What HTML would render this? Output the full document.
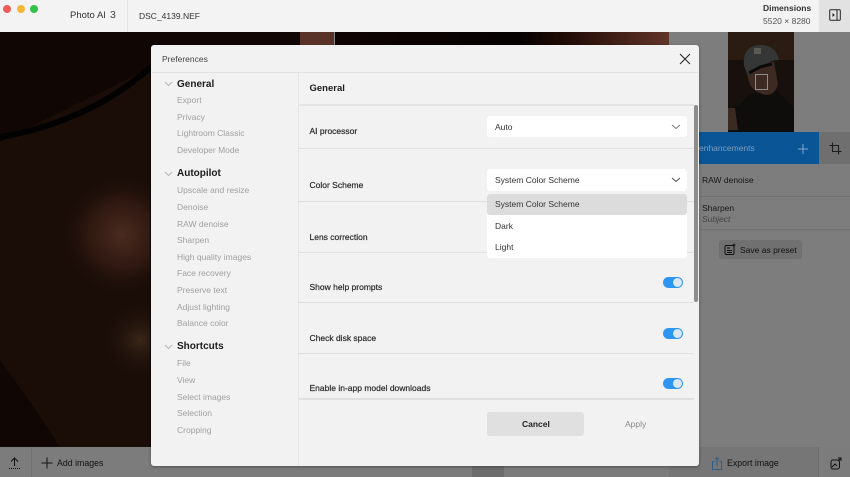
<!DOCTYPE html>
<html><head><meta charset="utf-8">
<style>
html,body{margin:0;padding:0}
body{width:850px;height:477px;overflow:hidden;position:relative;background:#7c7c7c;font-family:"Liberation Sans",sans-serif;color:#222}
div,span,svg{position:absolute}
.t{white-space:nowrap;line-height:12px;font-size:9px}
.h{font-size:10px;font-weight:bold;color:#1c1c1c;left:177px}
.s{color:#a0a0a0;left:177px;font-size:8.5px}
.l{left:309.5px;color:#2a2a2a;font-size:8.5px;-webkit-text-stroke:.2px #2a2a2a}
.ln{left:299px;width:395px;height:1px;background:#e0e0e0}
.sel{left:487px;width:200px;background:#fff;border-radius:3px}
.tg{left:663px;width:20px;height:11px;border-radius:6px;background:#2e96f2}
.tg i{position:absolute;right:1px;top:1px;width:9px;height:9px;border-radius:50%;background:#dbe7f2}
.d{color:#333;font-size:8.5px;left:495px}
.b{color:#111;font-size:8.5px}
</style></head><body>
<!-- photo -->
<svg style="left:0;top:32px" width="690" height="415" viewBox="0 32 690 415">
<defs>
<radialGradient id="a" cx="122" cy="235" r="62" gradientUnits="userSpaceOnUse"><stop offset="0" stop-color="#4a2b20"/><stop offset=".55" stop-color="#2e1810"/><stop offset="1" stop-color="#1a0d08" stop-opacity="0"/></radialGradient>
<radialGradient id="c" cx="140" cy="340" r="40" gradientUnits="userSpaceOnUse"><stop offset="0" stop-color="#3a2818"/><stop offset="1" stop-color="#1a0d08" stop-opacity="0"/></radialGradient>
<linearGradient id="b" x1="335" x2="669" y1="0" y2="0" gradientUnits="userSpaceOnUse"><stop offset="0" stop-color="#0e0403"/><stop offset=".55" stop-color="#060201"/><stop offset=".7" stop-color="#220c06"/><stop offset="1" stop-color="#623529"/></linearGradient>
</defs>
<rect x="0" y="32" width="690" height="415" fill="#100705"/>
<path d="M0 142 L150 68 L150 447 L60 447 Q30 400 0 360Z" fill="#1a0d08"/>
<rect x="50" y="165" width="100" height="140" fill="url(#a)"/>
<rect x="100" y="300" width="50" height="80" fill="url(#c)"/>
<path d="M-4 138 Q90 122 152 66" fill="none" stroke="#030201" stroke-width="6"/>
<rect x="300" y="32" width="34" height="13" fill="#5a3328"/>
<rect x="334" y="32" width="1" height="13" fill="#8a8a8a"/>
<rect x="335" y="32" width="334" height="13" fill="url(#b)"/>
</svg>
<div style="left:669px;top:32px;width:181px;height:415px;background:#7d7d7d"></div>
<!-- top bar -->
<div style="left:0;top:0;width:850px;height:32px;background:#f3f3f3"></div>
<div style="left:127px;top:0;width:1px;height:32px;background:#e4e4e4"></div>
<div style="left:3px;top:5px;width:8px;height:8px;border-radius:50%;background:#ef5b5b"></div>
<div style="left:17px;top:5px;width:8px;height:8px;border-radius:50%;background:#f5b73a"></div>
<div style="left:30px;top:5px;width:8px;height:8px;border-radius:50%;background:#34c04a"></div>
<div class="t" style="left:70px;top:10px;font-size:9.5px;color:#333">Photo AI</div>
<div class="t" style="left:110px;top:9px;font-size:10.5px;color:#444">3</div>
<div class="t" style="left:139px;top:10px;font-size:8.5px;color:#333">DSC_4139.NEF</div>
<div class="t" style="left:763px;top:2px;font-size:8.5px;font-weight:bold;color:#333">Dimensions</div>
<div class="t" style="left:763px;top:15px;font-size:8.5px;color:#555">5520 × 8280</div>
<div style="left:819px;top:0;width:31px;height:32px;background:#e2e2e2"></div>
<svg style="left:829px;top:9px" width="13" height="13" viewBox="0 0 13 13" fill="none" stroke="#222"><rect x=".7" y=".7" width="10.6" height="10.6" rx="1"/><path d="M8 .7V11.3"/><path d="M3.5 4l2.3 2-2.3 2z" fill="#222" stroke="none"/></svg>
<!-- thumb -->
<svg style="left:728px;top:32px" width="66" height="100" viewBox="0 0 66 100">
<rect width="66" height="100" fill="#17100c"/>
<rect width="66" height="28" fill="#2a1c12"/>
<path d="M0 100V78L12 72 22 62 48 58 60 70 66 76V100Z" fill="#0f0c0c"/>
<path d="M0 76h7l3 22H0z" fill="#3b2a22"/>
<path d="M17 34 Q30 28 46 30 L50 52 Q46 66 34 62 Q22 58 20 46Z" fill="#3d2a22"/>
<path d="M16 34 Q14 14 32 13 Q48 13 51 28 Q36 28 20 44Z" fill="#353736"/>
<rect x="26" y="16" width="7" height="6" fill="#5a5a52"/>
<path d="M21 41l11-6 12-3" stroke="#0b0b0b" stroke-width="3" fill="none"/>
<rect x="27.5" y="42.5" width="12" height="15" fill="none" stroke="#8d8d8d"/>
</svg>
<!-- right panel -->
<div style="left:690px;top:132px;width:129px;height:32px;background:#0a5596"></div>
<div class="t" style="left:699px;top:142px;font-size:8.5px;color:#7f9fbd">enhancements</div>
<svg style="left:797px;top:143px" width="12" height="12" stroke="#7fa6cc" fill="none"><path d="M6 1v10M1 6h10"/></svg>
<div style="left:819px;top:132px;width:31px;height:32px;background:#6f6f6f"></div>
<svg style="left:829px;top:142px" width="13" height="13" viewBox="0 0 13 13" fill="none" stroke="#1c1c1c" stroke-width="1.1"><path d="M3.5 .5V9.5H12.5M.5 3.5H9.5V12.5"/></svg>
<div class="t b" style="left:702px;top:174px;color:#161616">RAW denoise</div>
<div style="left:699px;top:196px;width:151px;height:1px;background:#727272"></div>
<div class="t b" style="left:702px;top:202px;color:#161616">Sharpen</div>
<div class="t" style="left:702px;top:213px;font-size:8.5px;font-style:italic;color:#444">Subject</div>
<div style="left:699px;top:229px;width:151px;height:1px;background:#727272"></div>
<div style="left:719px;top:240px;width:83px;height:19px;background:#707070;border-radius:3px"></div>
<svg style="left:724px;top:243px" width="12" height="13" viewBox="0 0 12 13" fill="none" stroke="#111"><rect x="1" y="2.5" width="9" height="9" rx="1.5"/><path d="M3 5h3M3 7.5h5M3 9.5h5"/><path d="M10 .5v3M8.5 2h3"/></svg>
<div class="t b" style="left:740px;top:244px">Save as preset</div>
<!-- bottom bar -->
<div style="left:0;top:447px;width:850px;height:30px;background:#7c7c7c"></div>
<div style="left:31px;top:447px;width:1px;height:30px;background:#727272"></div>
<div style="left:472px;top:447px;width:32px;height:30px;background:#6d6d6d"></div>
<div style="left:669px;top:447px;width:149px;height:30px;background:#767676"></div>
<div style="left:818px;top:447px;width:1px;height:30px;background:#6c6c6c"></div>
<svg style="left:8px;top:457px" width="13" height="13" viewBox="0 0 13 13" fill="none" stroke="#111"><path d="M6.5 1v8M3 4.5L6.5 1 10 4.5"/><path d="M1 11.5h11" stroke-dasharray="1 1"/></svg>
<svg style="left:41px;top:457px" width="12" height="12" stroke="#111" fill="none"><path d="M6 .5v11M.5 6h11"/></svg>
<div class="t" style="left:57px;top:457px;font-size:8.8px;color:#111">Add images</div>
<svg style="left:711px;top:457px" width="12" height="13" viewBox="0 0 12 13" fill="none" stroke="#2c5f8a"><path d="M3.5 4.5H1.5V12.5H10.5V4.5H8.5M6 9V.5M4 2.5L6 .5 8 2.5"/></svg>
<div class="t" style="left:727px;top:457px;font-size:8.8px;color:#111">Export image</div>
<svg style="left:830px;top:457px" width="12" height="13" viewBox="0 0 12 13" fill="none" stroke="#111"><rect x="1" y="3" width="8.5" height="9" rx="2"/><path d="M2 10l3-3 2 2M8 1h3v3M11 1L8 4"/></svg>
<!-- modal -->
<div style="left:151px;top:45px;width:548px;height:421px;background:#f2f2f2;border-radius:3px;box-shadow:0 1px 3px rgba(0,0,0,.35)"></div>
<div class="t" style="left:162px;top:53px;font-size:8.5px;color:#444">Preferences</div>
<svg style="left:679px;top:53px" width="12" height="12" stroke="#222" fill="none"><path d="M1 1l10 10M11 1L1 11"/></svg>
<div style="left:152px;top:72px;width:546px;height:1px;background:#e2e2e2"></div>
<div style="left:298px;top:73px;width:1px;height:393px;background:#e6e6e6"></div>
<svg style="left:164px;top:81px" width="9" height="6" stroke="#b5b5b5" fill="none"><path d="M1 1l3.5 3.5L8 1"/></svg>
<svg style="left:164px;top:171px" width="9" height="6" stroke="#b5b5b5" fill="none"><path d="M1 1l3.5 3.5L8 1"/></svg>
<svg style="left:164px;top:344px" width="9" height="6" stroke="#b5b5b5" fill="none"><path d="M1 1l3.5 3.5L8 1"/></svg>
<div class="t h" style="top:79px">General</div>
<div class="t s" style="top:94px">Export</div>
<div class="t s" style="top:111px">Privacy</div>
<div class="t s" style="top:127px">Lightroom Classic</div>
<div class="t s" style="top:144px">Developer Mode</div>
<div class="t h" style="top:168px">Autopilot</div>
<div class="t s" style="top:184px">Upscale and resize</div>
<div class="t s" style="top:201px">Denoise</div>
<div class="t s" style="top:218px">RAW denoise</div>
<div class="t s" style="top:234px">Sharpen</div>
<div class="t s" style="top:251px">High quality images</div>
<div class="t s" style="top:267px">Face recovery</div>
<div class="t s" style="top:284px">Preserve text</div>
<div class="t s" style="top:301px">Adjust lighting</div>
<div class="t s" style="top:317px">Balance color</div>
<div class="t h" style="top:341px">Shortcuts</div>
<div class="t s" style="top:357px">File</div>
<div class="t s" style="top:374px">View</div>
<div class="t s" style="top:391px">Select images</div>
<div class="t s" style="top:407px">Selection</div>
<div class="t s" style="top:424px">Cropping</div>
<div class="t" style="left:309.5px;top:83px;font-size:9.5px;font-weight:bold;color:#1c1c1c">General</div>
<div style="left:299px;top:104px;width:395px;height:2px;background:#e4e4e4"></div>
<div class="ln" style="top:148px"></div>
<div class="ln" style="top:201px"></div>
<div class="ln" style="top:252px"></div>
<div class="ln" style="top:302px"></div>
<div class="ln" style="top:353px"></div>
<div class="ln" style="top:398px;height:2px"></div>
<div class="t l" style="top:125px">AI processor</div>
<div class="t l" style="top:179px">Color Scheme</div>
<div class="t l" style="top:231px">Lens correction</div>
<div class="t l" style="top:281px">Show help prompts</div>
<div class="t l" style="top:332px">Check disk space</div>
<div class="t l" style="top:382px">Enable in-app model downloads</div>
<div class="sel" style="top:116px;height:21px"></div>
<div class="t d" style="top:121px">Auto</div>
<svg style="left:671px;top:124px" width="10" height="6" stroke="#777" fill="none"><path d="M1 1l4 3.5L9 1"/></svg>
<div class="sel" style="top:169px;height:22px"></div>
<div class="t d" style="top:174px">System Color Scheme</div>
<svg style="left:671px;top:177px" width="10" height="6" stroke="#555" fill="none"><path d="M1 1l4 3.5L9 1"/></svg>
<div class="sel" style="top:194px;height:64px"></div>
<div class="sel" style="top:194px;height:21px;background:#dcdcdc"></div>
<div class="t d" style="top:198px">System Color Scheme</div>
<div class="t d" style="top:220px">Dark</div>
<div class="t d" style="top:241px">Light</div>
<div class="tg" style="top:277px"><i></i></div>
<div class="tg" style="top:328px"><i></i></div>
<div class="tg" style="top:378px"><i></i></div>
<div style="left:694px;top:105px;width:4px;height:197px;background:#8c8c8c;border-radius:2px"></div>
<div style="left:487px;top:412px;width:97px;height:24px;background:#e0e0e0;border-radius:3px"></div>
<div class="t" style="left:522px;top:418px;font-size:8.5px;font-weight:bold;color:#222">Cancel</div>
<div class="t" style="left:625px;top:418px;font-size:8.5px;color:#8a8a8a">Apply</div>
</body></html>
